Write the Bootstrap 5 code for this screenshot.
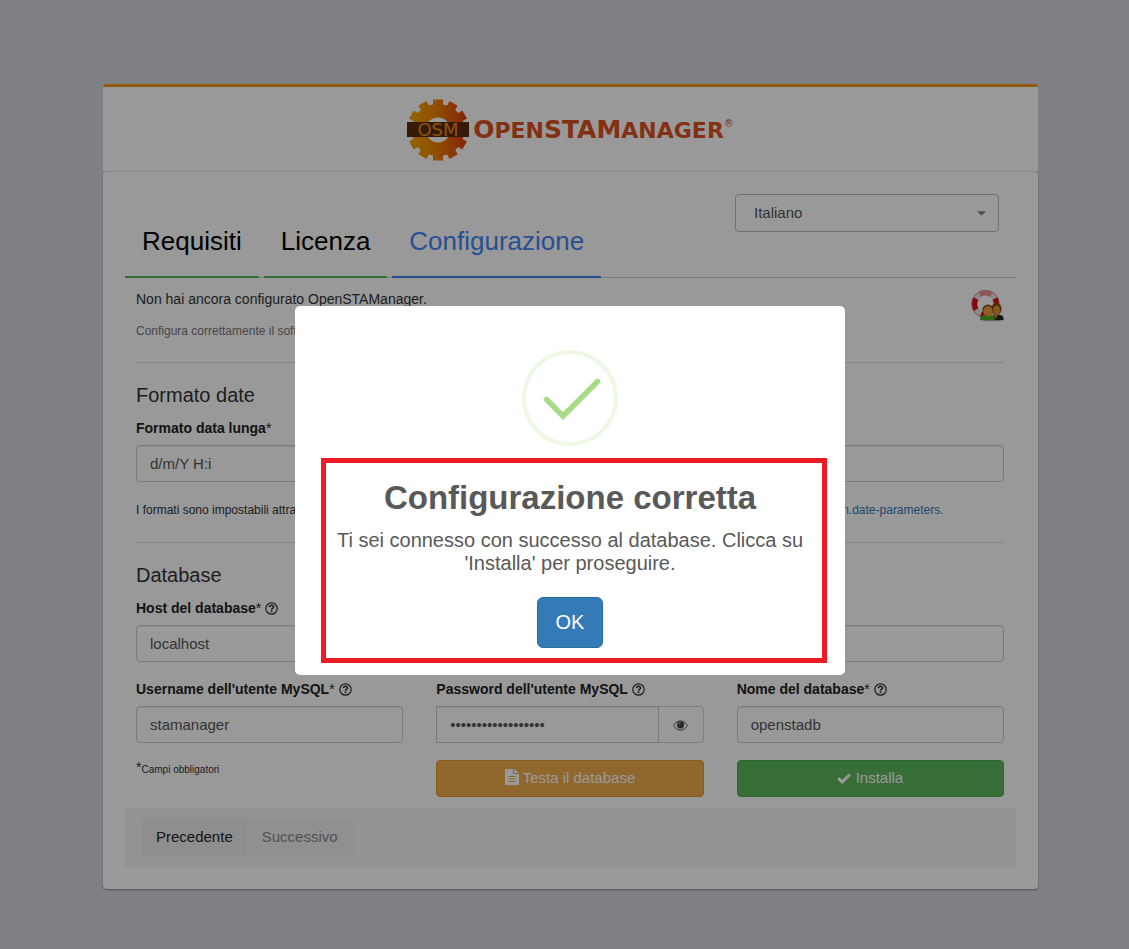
<!DOCTYPE html>
<html lang="it">
<head>
<meta charset="utf-8">
<meta name="viewport" content="width=device-width, initial-scale=1">
<title>OpenSTAManager - Configurazione</title>
<link rel="stylesheet" href="https://cdn.jsdelivr.net/npm/bootstrap@5.3.0/dist/css/bootstrap.min.css">
<style>
body{background:#d2d6de;color:#333;font-family:"Liberation Sans",Arial,sans-serif;font-size:14px;line-height:20px}
.page-wrap{padding:84px 0 60px 12px}
.setup-box{max-width:935px}
.setup-head{background:#fff;border-top:3px solid #f39c12;border-radius:3px 3px 0 0;height:87px;padding-top:2px}
.setup-body{background:#fff;border-top:1px solid #eaeaea;border-radius:4px;padding:22px;box-shadow:0 1px 2px rgba(0,0,0,.35)}
.brand-name{font-family:"DejaVu Sans",sans-serif;font-weight:bold;font-size:22px;line-height:26px;color:#dd5122}
.brand-name .cap{font-size:25px}
.brand-name sup{font-size:10px;font-weight:normal;top:-11px}
.top-row{border-bottom:1px solid #ccc;height:84px}
.steps{gap:5px;margin-bottom:-1px}
.steps .nav-link{color:#000;font-size:26px;line-height:36px;padding:16px 17px 17px;border:0;border-bottom:2px solid #5cb85c;border-radius:0}
.steps .nav-link.active{color:#4285f4;border-color:#4285f4}
.lang{width:264px;margin-right:17px}
.lang select{height:38px;border:1px solid #bbb;padding:0 18px;background:#fff url("data:image/svg+xml,%3Csvg xmlns='http://www.w3.org/2000/svg' viewBox='0 0 10 5'%3E%3Cpath d='M0 0h10L5 5z' fill='%23888'/%3E%3C/svg%3E") no-repeat right 12px center/9px 5px}
.form-control,.form-select{color:#555;font-size:15px;border-radius:4px}
.form-control{height:37px;padding:0 13px 1px;border-color:#ccc;box-shadow:inset 0 1px 1px rgba(0,0,0,.075)}
.setup-form{padding:11px 12px 11px 11px}
.hint{font-size:12px;color:#777}
.formats{font-size:12px;margin:18px 0 22px}
.formats a{color:#337ab7}
.divider{border-top:1px solid #ddd;opacity:1;margin:0 0 16px}
.intro{margin-bottom:21px}
.sect{font-size:20px;line-height:24px;margin:0 0 11px;font-weight:400}
.field-label{font-weight:700;display:block;margin-bottom:7px;color:#222}
.field-label span{font-weight:400}
.field-label svg{width:13px;height:13px;vertical-align:-2px}
.form-grid{--bs-gutter-x:33px}
.form-gap{margin-top:17px}
.eye-btn{width:45px;border:1px solid #d2d6de;border-left:0;border-radius:0 4px 4px 0;padding:0;background:#fff}
.act{font-size:15px;height:37px;color:#fff;border-radius:4px;padding:0 0 2px;line-height:20px}
.act-test{background:#f0ad4e;border-color:#e59728}
.act-go{background:#5cb85c;border-color:#4cae4c}
.required-note{font-size:10px}
.required-note sup{font-size:14px;top:-1px}
.wizard-foot{background:#f5f5f5;padding:11px 16px}
.wizard-foot .btn{font-size:15px;height:37px;padding:0 15px;border:0;background:#ededed;color:#222;border-radius:4px}
.wizard-foot .btn:disabled{background:#f0f0f0;color:#888;opacity:1}
.shade{background:rgba(0,0,0,.4);padding:32px 0 0 11px}
.dialog-box{width:550px;max-width:100%;background:#fff;border-radius:5px;color:#595959;padding:44px 18px 12px 26px}
.dialog-icon{width:96px;height:96px;margin-right:8px}
.dialog-main{border:5px solid #ed1c24;margin-top:12px;padding:15px 12px 10px 4px}
.dialog-main h2{font-size:33px;line-height:40px;font-weight:700;margin:0 0 11px}
.dialog-main p{font-size:20px;line-height:23px;margin:0 0 22px}
.dialog-main .btn{background:#337ab7;border-color:#2e6da4;color:#fff;font-size:20px;height:51px;width:66px;border-radius:6px;padding:0 0 2px}
</style>
</head>
<body>
<svg class="d-none" aria-hidden="true">
<symbol id="q" viewBox="0 0 13 13"><circle cx="6.5" cy="6.5" r="5.7" fill="none" stroke="#333" stroke-width="1.2"/><path d="M4.5 5.1C4.6 3.8 5.4 3.3 6.5 3.3S8.5 4 8.5 5C8.5 6.3 6.6 6.3 6.5 7.7" fill="none" stroke="#333" stroke-width="1.6"/><path d="M5.6 8.5h1.8v1.6H5.6z" fill="#333"/></symbol>
</svg>
<main class="page-wrap">
<div class="setup-box mx-auto">
<header class="setup-head d-flex align-items-center justify-content-center">
<svg width="62" height="62" viewBox="0 0 62 62" role="img" aria-label="OSM">
<defs><linearGradient id="gg" gradientUnits="userSpaceOnUse" x1="-29" x2="29" y1="0" y2="0"><stop offset="0" stop-color="#f3a800"/><stop offset=".5" stop-color="#ef8000"/><stop offset="1" stop-color="#dc3c12"/></linearGradient></defs>
<g transform="translate(31 31)"><path fill="url(#gg)" fill-rule="evenodd" d="M-5-30.500H5V-25.600L9.100-24.600 11.600-28.900 19.600-24.200 17.200-20 20.100-17 24.300-19.500 28.900-11.600 24.700-9.100 25.700-5V5L24.700 9.100 28.900 11.600 24.300 19.500 20.100 17 17.200 20 19.600 24.200 11.600 28.900 9.100 24.600 5 25.600V30.500H-5V25.600L-9.100 24.600-11.600 28.900-19.600 24.200-17.200 20-20.100 17-24.300 19.500-28.900 11.600-24.700 9.100-25.700 5V-5L-24.700-9.100-28.900-11.600-24.300-19.500-20.100-17-17.200-20-19.600-24.200-11.600-28.900-9.100-24.600-5-25.600ZM0-12.500A12.500 12.500 0 1 0 0 12.500 12.500 12.500 0 1 0 0-12.500Z"/></g>
<rect y="23" width="62" height="15" fill="#5c2a0e"/>
<text x="31" y="37" text-anchor="middle" font-family="DejaVu Sans" font-size="18" fill="#e98a10">OSM</text>
</svg>
<div class="brand-name text-nowrap ms-1"><span class="cap">O</span>PEN<span class="cap">STAM</span>ANAGER<sup>®</sup></div>
</header>
<div class="setup-body">
<div class="top-row d-flex justify-content-between align-items-start">
<ul class="nav steps align-self-end flex-nowrap">
<li><a class="nav-link" href="#requisiti">Requisiti</a></li>
<li><a class="nav-link" href="#licenza">Licenza</a></li>
<li><a class="nav-link active" href="#configurazione">Configurazione</a></li>
</ul>
<div class="lang"><select class="form-select" aria-label="Lingua"><option>Italiano</option></select></div>
</div>
<form class="setup-form">
<div class="intro d-flex justify-content-between">
<div><div>Non hai ancora configurato OpenSTAManager.</div><div class="hint mt-2 pt-1">Configura correttamente il software con i seguenti parametri:</div></div>
<svg width="33" height="33" viewBox="0 0 33 33" role="img" aria-label="Aiuto">
<ellipse cx="21" cy="30.500" rx="12" ry="1.800" fill="#aaa"/>
<circle cx="14.500" cy="15" r="11" fill="none" stroke="#e6e6e6" stroke-width="5.500"/>
<g fill="none" stroke="#e00c14" stroke-width="5.500"><path d="M5 9.500A11 11 0 0 0 5 20.500"/><path d="M24 9.500A11 11 0 0 1 25 18"/><path d="M10 25A11 11 0 0 0 15 26"/></g>
<path d="M8 3.500A13.500 13.500 0 0 1 21 3.500L19.500 8A9 9 0 0 0 9.500 8Z" fill="#f08a90"/>
<circle cx="14.500" cy="15" r="13.700" fill="none" stroke="#b84b4e" stroke-width=".6"/>
<path d="M20 31C20 25 32 24 32.500 29V31Z" fill="#222"/><path d="M22 25l3 5 2-5z" fill="#d87a16"/>
<ellipse cx="25.500" cy="20" rx="5" ry="6.300" fill="#8c4a16"/><ellipse cx="25.500" cy="21.500" rx="3.600" ry="4.800" fill="#e39231"/>
<path d="M9 31C9 26 13 26 17 26S24 27 24 31Z" fill="#51ad20"/>
<circle cx="17" cy="21" r="5.600" fill="#8c4a16"/><ellipse cx="17" cy="22.200" rx="4.600" ry="5" fill="#eda044"/>
</svg>
</div>
<hr class="divider">
<h4 class="sect pt-1">Formato date</h4>
<div class="row form-grid">
<div class="col-4"><label class="field-label" for="fl">Formato data lunga<span>*</span></label><input class="form-control" id="fl" value="d/m/Y H:i"></div>
<div class="col-4"><label class="field-label" for="fb">Formato data breve<span>*</span></label><input class="form-control" id="fb" value="d/m/Y"></div>
<div class="col-4"><label class="field-label" for="fo">Formato orario<span>*</span></label><input class="form-control" id="fo" value="H:i"></div>
</div>
<div class="formats text-nowrap">I formati sono impostabili attraverso lo standard previsto da PHP in <a class="text-decoration-none" href="#date">https://www.php.net/manual/en/function.date.php#refsect1-function.date-parameters.</a></div>
<hr class="divider">
<h4 class="sect pt-1">Database</h4>
<label class="field-label" for="host">Host del database<span>*</span> <svg><use href="#q"/></svg></label>
<input class="form-control" id="host" value="localhost">
<div class="row form-grid form-gap">
<div class="col-4"><label class="field-label" for="us">Username dell'utente MySQL<span>*</span> <svg><use href="#q"/></svg></label><input class="form-control" id="us" value="stamanager"></div>
<div class="col-4"><label class="field-label" for="pw">Password dell'utente MySQL <svg><use href="#q"/></svg></label>
<div class="d-flex"><input class="form-control rounded-0" type="password" id="pw" value="stamanagerpassword"><button type="button" class="btn eye-btn flex-shrink-0" aria-label="Mostra password"><svg width="15" height="11" viewBox="0 0 15 11"><path d="M.6 5.500C4-.6 11-.6 14.400 5.500 11 11.600 4 11.600.6 5.500Z" fill="none" stroke="#555"/><circle cx="7.500" cy="4.800" r="3.600" fill="#444"/><path d="M5.500 4.500A2 2 0 0 1 7.500 2.500" fill="none" stroke="#ddd" stroke-width=".8"/></svg></button></div></div>
<div class="col-4"><label class="field-label" for="db">Nome del database<span>*</span> <svg><use href="#q"/></svg></label><input class="form-control" id="db" value="openstadb"></div>
</div>
<div class="row form-grid form-gap">
<div class="col-4 required-note"><sup>*</sup>Campi obbligatori</div>
<div class="col-4"><button type="button" class="btn act act-test w-100"><svg width="14" height="16" viewBox="0 0 14 16" style="vertical-align:-2px"><path d="M0 0H8V5H14V16H0ZM9 0L14 4H9Z" fill="#fff"/><path d="M3.500 7.500h7M3.500 10h7M3.500 12.500h7" stroke="#f0ad4e"/></svg> Testa il database</button></div>
<div class="col-4"><button type="button" class="btn act act-go w-100"><svg width="14" height="11" viewBox="0 0 14 11"><path d="M1.200 5.200L5.200 9 12.800 1.500" fill="none" stroke="#fff" stroke-width="3"/></svg> Installa</button></div>
</div>
</form>
<footer class="wizard-foot"><div class="btn-group"><button type="button" class="btn">Precedente</button><button type="button" class="btn" disabled>Successivo</button></div></footer>
</div>
</div>
</main>
<div class="shade position-fixed top-0 start-0 w-100 h-100 d-flex align-items-center justify-content-center">
<div class="dialog-box text-center" role="dialog" aria-modal="true" aria-labelledby="dlg">
<svg class="dialog-icon" viewBox="0 0 96 96"><circle cx="48" cy="48" r="46" fill="none" stroke="#edf8e7" stroke-width="4"/><path d="M24.500 49.500L41 66 75.500 31.500" fill="none" stroke="#a5dc86" stroke-width="5.500" stroke-linecap="round"/></svg>
<div class="dialog-main">
<h2 id="dlg">Configurazione corretta</h2>
<p>Ti sei connesso con successo al database. Clicca su 'Installa' per proseguire.</p>
<button type="button" class="btn">OK</button>
</div>
</div>
</div>
<script src="https://cdn.jsdelivr.net/npm/bootstrap@5.3.0/dist/js/bootstrap.bundle.min.js"></script>
</body>
</html>
